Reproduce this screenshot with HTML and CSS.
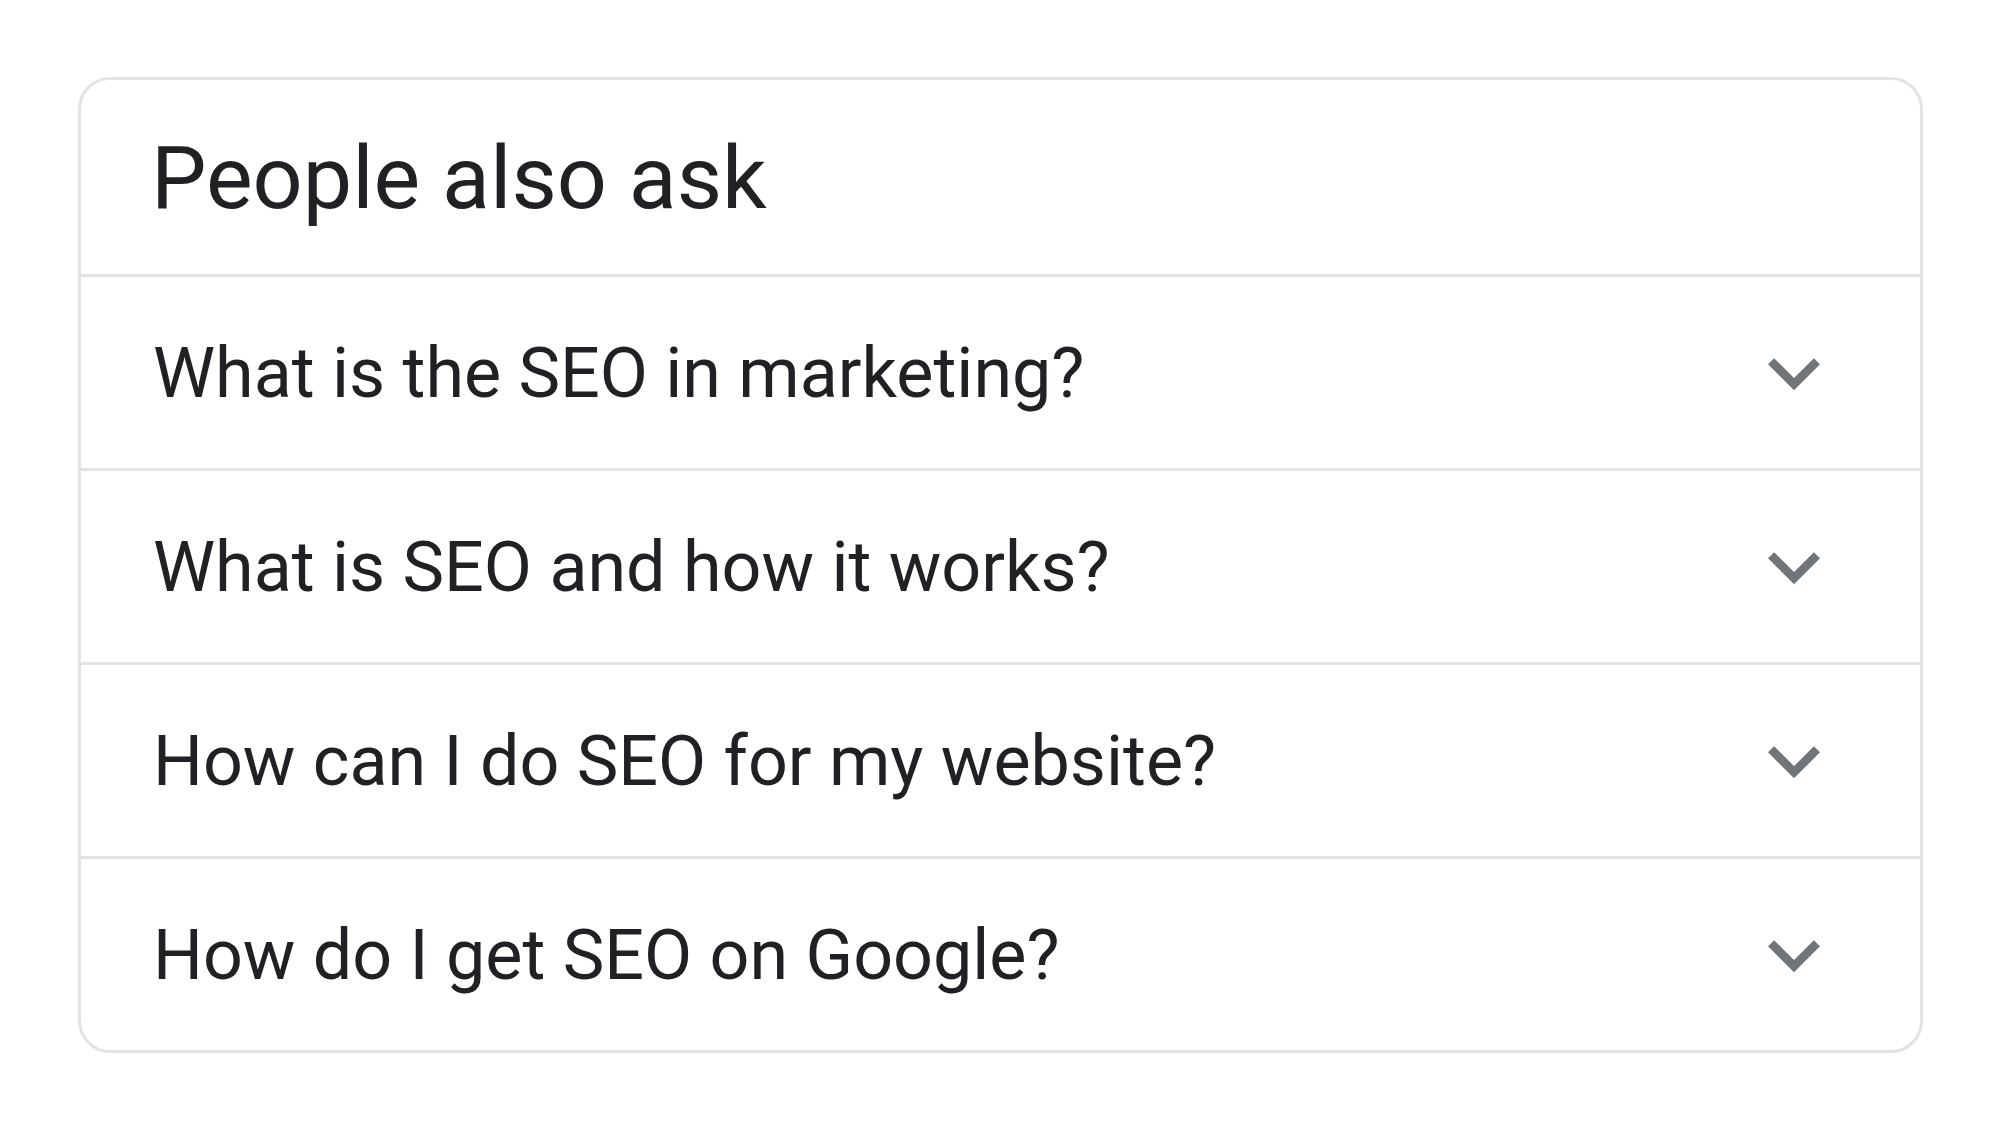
FILE: index.html
```html
<!DOCTYPE html>
<html lang="en">
<head>
<meta charset="utf-8">
<title>People also ask</title>
<link rel="stylesheet" href="styles.css">
</head>
<body>
<section class="paa">
  <h2 class="paa-title">People also ask</h2>
  <div class="paa-row">
    <span class="paa-q">What is the SEO in marketing?</span>
    <svg class="paa-chev" viewBox="0 0 24 24"><path d="M16.59 8.59L12 13.17 7.41 8.59 6 10l6 6 6-6z"/></svg>
  </div>
  <div class="paa-row">
    <span class="paa-q">What is SEO and how it works?</span>
    <svg class="paa-chev" viewBox="0 0 24 24"><path d="M16.59 8.59L12 13.17 7.41 8.59 6 10l6 6 6-6z"/></svg>
  </div>
  <div class="paa-row">
    <span class="paa-q">How can I do SEO for my website?</span>
    <svg class="paa-chev" viewBox="0 0 24 24"><path d="M16.59 8.59L12 13.17 7.41 8.59 6 10l6 6 6-6z"/></svg>
  </div>
  <div class="paa-row">
    <span class="paa-q">How do I get SEO on Google?</span>
    <svg class="paa-chev" viewBox="0 0 24 24"><path d="M16.59 8.59L12 13.17 7.41 8.59 6 10l6 6 6-6z"/></svg>
  </div>
</section>
</body>
</html>
```
FILE: styles.css
```css
* { box-sizing: border-box; }
html, body { background: #ffffff; }
body {
  margin: 0;
  padding: 77px 76px 0 78px;
  font-family: Roboto, "Liberation Sans", Arial, sans-serif;
  color: #202124;
}
.paa {
  width: 1845px;
  border: 3px solid #e2e3e5;
  border-radius: 32px;
  overflow: hidden;
  background: #fff;
}
.paa-title {
  margin: 0;
  height: 194px;
  display: flex;
  align-items: center;
  padding-left: 70px;
  font-size: 88px;
  font-weight: 400;
  line-height: normal;
}
.paa-row {
  height: 194px;
  border-top: 3px solid #e2e3e5;
  display: flex;
  align-items: center;
  justify-content: space-between;
  padding-left: 72px;
  padding-right: 74px;
}
.paa-q {
  font-size: 70px;
  line-height: normal;
}
.paa-chev {
  width: 104px;
  height: 104px;
  fill: #70757a;
  flex: none;
}
```
